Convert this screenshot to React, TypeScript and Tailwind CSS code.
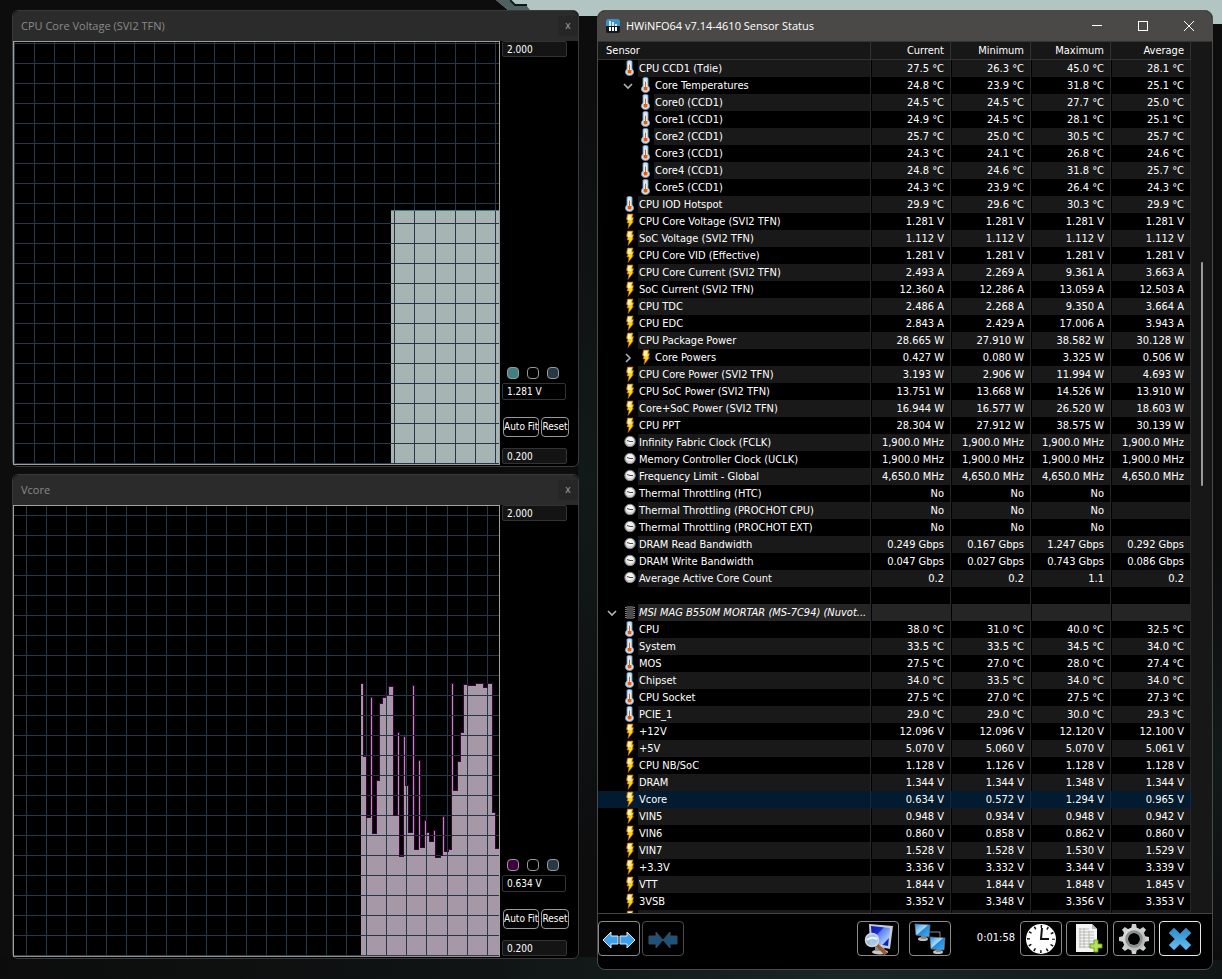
import { useId } from "react";
import clsx from "clsx";

type Kind = "temp" | "power" | "clock" | "chip" | "none";

interface SensorRow {
  kind: Kind;
  name: string;
  values: string[];
  nested?: boolean;
  toggle?: "open" | "closed";
}

interface Point {
  x: number;
  y: number;
}

interface GraphWindowProps {
  title: string;
  value: string;
  viewHeight: number;
  columns: number[];
  rows: number[];
  points: Point[];
  line: string;
  fill: string;
  swatchClass: string;
  className: string;
}

const row = (kind: Kind, name: string, values: string): SensorRow => ({
  kind,
  name,
  values: values ? values.split("|") : ["", "", "", ""],
});

const nested = (
  kind: Kind,
  name: string,
  values: string,
  toggle?: "open" | "closed"
): SensorRow => ({ ...row(kind, name, values), nested: true, toggle });

const SENSORS: SensorRow[] = [
  row("temp", "CPU CCD1 (Tdie)", "27.5 °C|26.3 °C|45.0 °C|28.1 °C"),
  nested("temp", "Core Temperatures", "24.8 °C|23.9 °C|31.8 °C|25.1 °C", "open"),
  nested("temp", "Core0 (CCD1)", "24.5 °C|24.5 °C|27.7 °C|25.0 °C"),
  nested("temp", "Core1 (CCD1)", "24.9 °C|24.5 °C|28.1 °C|25.1 °C"),
  nested("temp", "Core2 (CCD1)", "25.7 °C|25.0 °C|30.5 °C|25.7 °C"),
  nested("temp", "Core3 (CCD1)", "24.3 °C|24.1 °C|26.8 °C|24.6 °C"),
  nested("temp", "Core4 (CCD1)", "24.8 °C|24.6 °C|31.8 °C|25.7 °C"),
  nested("temp", "Core5 (CCD1)", "24.3 °C|23.9 °C|26.4 °C|24.3 °C"),
  row("temp", "CPU IOD Hotspot", "29.9 °C|29.6 °C|30.3 °C|29.9 °C"),
  row("power", "CPU Core Voltage (SVI2 TFN)", "1.281 V|1.281 V|1.281 V|1.281 V"),
  row("power", "SoC Voltage (SVI2 TFN)", "1.112 V|1.112 V|1.112 V|1.112 V"),
  row("power", "CPU Core VID (Effective)", "1.281 V|1.281 V|1.281 V|1.281 V"),
  row("power", "CPU Core Current (SVI2 TFN)", "2.493 A|2.269 A|9.361 A|3.663 A"),
  row("power", "SoC Current (SVI2 TFN)", "12.360 A|12.286 A|13.059 A|12.503 A"),
  row("power", "CPU TDC", "2.486 A|2.268 A|9.350 A|3.664 A"),
  row("power", "CPU EDC", "2.843 A|2.429 A|17.006 A|3.943 A"),
  row("power", "CPU Package Power", "28.665 W|27.910 W|38.582 W|30.128 W"),
  nested("power", "Core Powers", "0.427 W|0.080 W|3.325 W|0.506 W", "closed"),
  row("power", "CPU Core Power (SVI2 TFN)", "3.193 W|2.906 W|11.994 W|4.693 W"),
  row("power", "CPU SoC Power (SVI2 TFN)", "13.751 W|13.668 W|14.526 W|13.910 W"),
  row("power", "Core+SoC Power (SVI2 TFN)", "16.944 W|16.577 W|26.520 W|18.603 W"),
  row("power", "CPU PPT", "28.304 W|27.912 W|38.575 W|30.139 W"),
  row("clock", "Infinity Fabric Clock (FCLK)", "1,900.0 MHz|1,900.0 MHz|1,900.0 MHz|1,900.0 MHz"),
  row("clock", "Memory Controller Clock (UCLK)", "1,900.0 MHz|1,900.0 MHz|1,900.0 MHz|1,900.0 MHz"),
  row("clock", "Frequency Limit - Global", "4,650.0 MHz|4,650.0 MHz|4,650.0 MHz|4,650.0 MHz"),
  row("clock", "Thermal Throttling (HTC)", "No|No|No|"),
  row("clock", "Thermal Throttling (PROCHOT CPU)", "No|No|No|"),
  row("clock", "Thermal Throttling (PROCHOT EXT)", "No|No|No|"),
  row("clock", "DRAM Read Bandwidth", "0.249 Gbps|0.167 Gbps|1.247 Gbps|0.292 Gbps"),
  row("clock", "DRAM Write Bandwidth", "0.047 Gbps|0.027 Gbps|0.743 Gbps|0.086 Gbps"),
  row("clock", "Average Active Core Count", "0.2|0.2|1.1|0.2"),
  row("none", "", ""),
  { ...row("chip", "MSI MAG B550M MORTAR (MS-7C94) (Nuvot...", ""), toggle: "open" },
  row("temp", "CPU", "38.0 °C|31.0 °C|40.0 °C|32.5 °C"),
  row("temp", "System", "33.5 °C|33.5 °C|34.5 °C|34.0 °C"),
  row("temp", "MOS", "27.5 °C|27.0 °C|28.0 °C|27.4 °C"),
  row("temp", "Chipset", "34.0 °C|33.5 °C|34.0 °C|34.0 °C"),
  row("temp", "CPU Socket", "27.5 °C|27.0 °C|27.5 °C|27.3 °C"),
  row("temp", "PCIE_1", "29.0 °C|29.0 °C|30.0 °C|29.3 °C"),
  row("power", "+12V", "12.096 V|12.096 V|12.120 V|12.100 V"),
  row("power", "+5V", "5.070 V|5.060 V|5.070 V|5.061 V"),
  row("power", "CPU NB/SoC", "1.128 V|1.126 V|1.128 V|1.128 V"),
  row("power", "DRAM", "1.344 V|1.344 V|1.348 V|1.344 V"),
  row("power", "Vcore", "0.634 V|0.572 V|1.294 V|0.965 V"),
  row("power", "VIN5", "0.948 V|0.934 V|0.948 V|0.942 V"),
  row("power", "VIN6", "0.860 V|0.858 V|0.862 V|0.860 V"),
  row("power", "VIN7", "1.528 V|1.528 V|1.530 V|1.529 V"),
  row("power", "+3.3V", "3.336 V|3.332 V|3.344 V|3.339 V"),
  row("power", "VTT", "1.844 V|1.844 V|1.848 V|1.845 V"),
  row("power", "3VSB", "3.352 V|3.348 V|3.356 V|3.353 V"),
  row("power", "", ""),
];

const SELECTED = "Vcore";

const VOLTAGE_POINTS: Point[] = [{ x: 378, y: 169 }];

// Left edge and top of every step of the Vcore history
const VCORE_POINTS: Point[] = [
  [348, 178], [350, 251], [353, 312], [357, 192], [359, 328], [363, 275],
  [366, 198], [369, 192], [372, 189], [375, 181], [380, 310], [384, 227],
  [386, 351], [390, 231], [392, 280], [395, 327], [399, 180], [401, 344],
  [405, 255], [407, 342], [411, 315], [413, 327], [416, 336], [420, 325],
  [422, 352], [427, 350], [429, 311], [431, 346], [435, 344], [438, 178],
  [440, 285], [444, 256], [447, 227], [450, 179], [455, 180], [462, 178],
  [470, 182], [474, 178], [479, 307], [482, 343],
].map(([x, y]) => ({ x, y }));

// One grid line in the middle sits a pixel further right
const gridColumns = (start: number, shiftFrom: number) =>
  Array.from({ length: 25 }, (_, i) => start + i * 20 + (i >= shiftFrom ? 1 : 0)).filter(
    (x) => x < 486
  );

const gridRows = (start: number, height: number) =>
  Array.from({ length: 25 }, (_, i) => start + i * 20).filter((y) => y < height - 1);

function stepPath(points: Point[]) {
  const [first, ...rest] = points;
  return `M${first.x} ${first.y}${rest.map((p) => `H${p.x}V${p.y}`).join("")}H486`;
}

// The outline is laid as one pixel wide bars so that narrow spikes stay open
function StepOutline({ points, color }: { points: Point[]; color: string }) {
  return (
    <g fill={color}>
      {points.map((p, i) => {
        const right = points[i + 1]?.x ?? 485;
        const previous = points[i - 1]?.y ?? p.y;
        return (
          <g key={p.x}>
            <rect height="1" width={right - p.x + 1} x={p.x} y={p.y} />
            <rect height={Math.abs(previous - p.y) + 1} width="1" x={p.x} y={Math.min(previous, p.y)} />
          </g>
        );
      })}
    </g>
  );
}

function Wallpaper() {
  const id = useId();
  return (
    <svg
      aria-hidden="true"
      className="absolute inset-0 -z-10 h-full w-full"
      preserveAspectRatio="none"
      viewBox="0 0 1222 979"
    >
      <defs>
        <linearGradient id={id} x1="0" x2="1" y1="0" y2="0">
          <stop offset="0" stopColor="#0c0c0c" />
          <stop offset="0.4" stopColor="#101414" />
          <stop offset="0.7" stopColor="#1a2626" />
          <stop offset="1" stopColor="#101616" />
        </linearGradient>
        <linearGradient id={`${id}v`} x1="0" x2="0" y1="0" y2="1">
          <stop offset="0" stopColor="#0d0d0e" />
          <stop offset="0.5" stopColor="#121919" />
          <stop offset="1" stopColor="#0d0d0e" />
        </linearGradient>
      </defs>
      <rect fill="#0d0d0e" height="979" width="1222" />
      <rect fill={`url(#${id}v)`} height="760" width="20" x="578" y="100" />
      <rect fill={`url(#${id})`} height="22" width="1222" y="957" />
      <rect fill={`url(#${id}v)`} height="400" width="10" x="1212" y="560" />
      <path d="M496 0H1222V24H1200V16H530L508 10Z" fill="#b2c5c3" />
      <path d="M496 0L508 10H530L526 5H514L509 0Z" fill="#4f6060" />
      <path d="M510 0L515 5H527" fill="none" stroke="#101818" strokeWidth="2" />
    </svg>
  );
}

function GraphWindow({
  title,
  value,
  viewHeight,
  columns,
  rows,
  points,
  line,
  fill,
  swatchClass,
  className,
}: GraphWindowProps) {
  return (
    <section
      className={clsx(
        "flex min-h-0 flex-col rounded-md border border-[#3a3a3a] bg-black pb-px",
        className
      )}
    >
      <header className="flex h-[30px] shrink-0 items-center justify-between rounded-t-md bg-[#2b2b2b] pl-2">
        <h2 className="font-['Open_Sans',sans-serif] text-[11px] text-[#8a8a8a]">{title}</h2>
        <button
          aria-label={`Close ${title}`}
          className="h-5 w-5 bg-[#262626] text-[11px] leading-5 text-[#9a9a9a]"
          type="button"
        >
          x
        </button>
      </header>
      <div className="flex min-h-0 flex-1">
        <svg
          aria-label={`${title} history`}
          className="h-full min-w-0 flex-1"
          preserveAspectRatio="none"
          role="img"
          shapeRendering="crispEdges"
          viewBox={`0 0 487 ${viewHeight}`}
        >
          <path d={`${stepPath(points)}V${viewHeight - 1}H${points[0].x}Z`} fill={fill} />
          {columns.map((x) => (
            <rect fill="#263746" height={viewHeight} key={x} width="1" x={x} y="1" />
          ))}
          {rows.map((y) => (
            <rect fill="#263746" height="1" key={y} width="486" x="1" y={y} />
          ))}
          <StepOutline color={line} points={points} />
          <rect
            fill="none"
            height={viewHeight - 1}
            stroke="#a0a0a0"
            width="486"
            x="0.5"
            y="0.5"
          />
        </svg>
        <div className="flex w-[78px] shrink-0 flex-col items-start pb-px pl-0.5">
          <input
            aria-label="Scale maximum"
            className="h-4 w-[65px] rounded-xs border border-[#333] bg-[#141414] pl-1 text-[10px] text-white"
            defaultValue="2.000"
          />
          <div className="mt-auto mb-1 flex gap-2 pl-[5px]">
            <button
              aria-label="Line color"
              className={clsx("h-3 w-3 rounded-sm border border-[#999]", swatchClass)}
              type="button"
            />
            <button
              aria-label="Background color"
              className="h-3 w-3 rounded-sm border border-[#999] bg-black"
              type="button"
            />
            <button
              aria-label="Grid color"
              className="h-3 w-3 rounded-sm border border-[#999] bg-[#263746]"
              type="button"
            />
          </div>
          <input
            aria-label="Current value"
            className="h-[17px] w-16 rounded-xs border border-[#333] bg-black pl-1 text-[10px] text-white"
            readOnly
            value={value}
          />
          <div className="mt-[17px] mb-[11px] flex gap-0.5 pl-px">
            <button
              className="h-5 w-9 rounded-sm border border-[#999] text-[10px] leading-4 whitespace-nowrap text-white"
              type="button"
            >
              Auto Fit
            </button>
            <button
              className="h-5 w-7 rounded-sm border border-[#999] text-[10px] leading-4 text-white"
              type="button"
            >
              Reset
            </button>
          </div>
          <input
            aria-label="Scale minimum"
            className="h-4 w-[65px] rounded-xs border border-[#333] bg-[#141414] pl-1 text-[10px] text-white"
            defaultValue="0.200"
          />
        </div>
      </div>
    </section>
  );
}

function SensorIcon({ kind }: { kind: Kind }) {
  if (kind === "none") {
    return <span className="w-4 shrink-0" />;
  }
  return (
    <svg aria-hidden="true" className="h-[17px] w-4 shrink-0" viewBox="0 0 16 17">
      {kind === "temp" && (
        <>
          <path
            d="M5 1.500Q5 .5 7.500 .5T10 1.500V9Q12 10.500 11.500 13Q10.500 15.500 7.500 15.500T3.500 13Q3 10.500 5 9Z"
            fill="#cfe4f2"
            stroke="#6f9fc0"
            strokeWidth=".9"
          />
          <path d="M6.500 3.500H8.500V9.500L10 11V14H5V11L6.500 9.500Z" fill="#fff" />
          <path d="M7 4.500H8V10H9.500V13.500H5.500V10H7Z" fill="#e8590c" />
        </>
      )}
      {kind === "power" && (
        <>
          <path
            d="M5.500 1H11L10 4.500H11.500L10.500 8.500H11.500L6 15.500L7 10H5L6 6.500H4.500Z"
            fill="#ffd21c"
            stroke="#b8620c"
            strokeWidth=".6"
          />
          <path d="M6.200 2H9.500L8.500 5.500H10L9 7H5.500Z" fill="#fff2b8" />
        </>
      )}
      {kind === "clock" && (
        <>
          <circle cx="8" cy="7.500" fill="#d6d6d6" r="5.200" stroke="#858585" />
          <circle cx="8" cy="6.500" fill="#f4f4f4" r="3.600" />
          <path d="M5 6.500L8 7.500H11" fill="none" stroke="#444" />
        </>
      )}
      {kind === "chip" && (
        <>
          <path
            d="M3 3.500H13M3 5.500H13M3 7.500H13M3 9.500H13M3 11.500H13M3 13.500H13"
            stroke="#8c8c8c"
          />
          <rect fill="#4c4c4c" height="13" width="7" x="4.500" y="2" />
        </>
      )}
    </svg>
  );
}

function Toggle({ state }: { state?: "open" | "closed" }) {
  if (!state) {
    return <span className="mr-1 w-3 shrink-0" />;
  }
  return (
    <button
      aria-label={state === "open" ? "Collapse group" : "Expand group"}
      className="mr-1 flex w-3 shrink-0 items-center justify-center"
      type="button"
    >
      <svg className="h-3 w-3" fill="none" stroke="#b4b4b4" strokeWidth="1.600" viewBox="0 0 12 12">
        <path d={state === "open" ? "M2 4L6 8L10 4" : "M4 2L8 6L4 10"} />
      </svg>
    </button>
  );
}

function SensorLine({ sensor, index }: { sensor: SensorRow; index: number }) {
  const selected = sensor.name === SELECTED;
  const shade = clsx(
    selected && "bg-[#021b30]",
    !selected && sensor.kind === "chip" && "bg-[#252525]",
    !selected && sensor.kind !== "chip" && (index % 2 === 0 ? "bg-[#191919]" : "bg-black")
  );
  return (
    <tr className="h-[17px]">
      <td className={clsx("border-r border-[#24282c] p-0", selected && "bg-[#021b30]")}>
        <div className={clsx("flex h-[17px]", sensor.nested ? "pl-6" : "pl-2")}>
          <Toggle state={sensor.toggle} />
          <SensorIcon kind={sensor.kind} />
          <span
            className={clsx(
              "min-w-0 flex-1 pt-px pl-px leading-4 whitespace-nowrap",
              sensor.kind === "chip" && "italic",
              shade
            )}
          >
            {sensor.name}
          </span>
        </div>
      </td>
      {sensor.values.map((value, i) => (
        <td
          className={clsx(
            "border-r border-l p-0 pt-px pr-1.5 text-right leading-4 whitespace-nowrap",
            selected ? "border-r-[#0a2c48] border-l-[#021b30]" : "border-r-[#24282c] border-l-black",
            shade
          )}
          key={i}
        >
          {value}
        </td>
      ))}
    </tr>
  );
}

function SensorTable() {
  return (
    <div className="flex min-h-0 flex-1 overflow-hidden border-t border-[#333] bg-black text-[11px] text-white">
      <table className="w-full min-w-0 flex-1 table-fixed border-separate border-spacing-0 self-start">
        <colgroup>
          <col />
          <col className="w-20" />
          <col className="w-20" />
          <col className="w-20" />
          <col className="w-20" />
        </colgroup>
        <thead>
          <tr className="h-[18px] bg-[#171717]">
            <th className="border-r border-b border-[#333] p-0 pl-2 text-left leading-[17px] font-normal">
              Sensor
            </th>
            {["Current", "Minimum", "Maximum", "Average"].map((label) => (
              <th
                className="border-r border-b border-[#333] p-0 pr-1.5 text-right leading-[17px] font-normal"
                key={label}
              >
                {label}
              </th>
            ))}
          </tr>
        </thead>
        <tbody>
          {SENSORS.map((sensor, index) => (
            <SensorLine index={index} key={index} sensor={sensor} />
          ))}
        </tbody>
      </table>
      <div className="flex w-[21px] shrink-0 flex-col items-center bg-[#171717]">
        <div className="flex-[220]" />
        <div className="w-0.5 flex-[224] rounded-full bg-[#9a9a9a]" />
        <div className="flex-[427]" />
      </div>
    </div>
  );
}

function ToolButton({
  label,
  className = "border-[#8a8a8a]",
  children,
}: {
  label: string;
  className?: string;
  children: React.ReactNode;
}) {
  return (
    <button
      aria-label={label}
      className={clsx(
        "flex h-[35px] w-[42px] items-center justify-center rounded-sm border bg-black",
        className
      )}
      type="button"
    >
      <svg className="h-8 w-9" viewBox="0 0 36 32">
        {children}
      </svg>
    </button>
  );
}

function Toolbar() {
  const id = useId();
  return (
    <footer className="flex shrink-0 items-center border-t border-[#444] pt-[7px] pr-[11px] pb-[13px]">
      <ToolButton label="Expand columns">
        <path d="M2 17L10 9V13H17V21H10V25Z" fill="#3ea0ec" stroke="#d8efff" />
        <path d="M34 17L26 9V13H19V21H26V25Z" fill="#3ea0ec" stroke="#d8efff" />
      </ToolButton>
      <div className="ml-0.5">
        <ToolButton className="border-[#4a4a4a]" label="Shrink columns">
          <path d="M18 17L11 9V13H4V21H11V25Z" fill="#1c527c" stroke="#3c4c58" />
          <path d="M18 17L25 9V13H32V21H25V25Z" fill="#1c527c" stroke="#3c4c58" />
        </ToolButton>
      </div>
      <div className="ml-auto flex items-center">
        <ToolButton label="Sensor summary">
          <defs>
            <linearGradient id={`${id}s`} x1="0" x2="1" y1="0" y2="1">
              <stop offset="0" stopColor="#0a14b4" />
              <stop offset="0.35" stopColor="#1a30d0" />
              <stop offset="0.4" stopColor="#5c80ee" />
              <stop offset="0.75" stopColor="#a4c4ff" />
              <stop offset="0.8" stopColor="#0a22c0" />
            </linearGradient>
          </defs>
          <ellipse cx="20" cy="29" fill="#c8c8c8" rx="8" ry="2.500" />
          <path d="M15 23H24L25 28H15Z" fill="#909090" />
          <path d="M9 1L33 3L30 26L10 22Z" fill="#c8ccd4" />
          <path d="M11 3L30 5L28 23L12 20Z" fill={`url(#${id}s)`} />
          <path d="M17 22L26 31" stroke="#9a5b2c" strokeWidth="3.500" />
          <circle cx="12" cy="17" fill="#a9cdea" fillOpacity=".9" r="6.500" stroke="#d8d8d8" strokeWidth="1.500" />
          <path d="M7 17Q11 13 17 16" fill="none" stroke="#e9f6ff" strokeWidth="2" />
        </ToolButton>
        <div className="ml-[10px]">
          <ToolButton label="Remote sensors">
            <defs>
              <linearGradient id={`${id}m`} x1="0" x2="1" y1="0" y2="1">
                <stop offset="0" stopColor="#2a90e4" />
                <stop offset="0.45" stopColor="#a8dcff" />
                <stop offset="0.5" stopColor="#2488dc" />
                <stop offset="1" stopColor="#4ab0f4" />
              </linearGradient>
            </defs>
            <path d="M18 9H28V15" fill="none" stroke="#888" />
            <ellipse cx="11" cy="16" fill="#c0c0c0" rx="5" ry="2" />
            <path d="M9 12H14V16H9Z" fill="#888" />
            <path d="M3 1L18 2L17 14L4 12Z" fill={`url(#${id}m)`} stroke="#6a7a88" strokeWidth=".7" />
            <ellipse cx="26" cy="29" fill="#c0c0c0" rx="5" ry="2" />
            <path d="M24 25H29V29H24Z" fill="#888" />
            <path d="M18 14L33 15L32 27L19 26Z" fill={`url(#${id}m)`} stroke="#6a7a88" strokeWidth=".7" />
          </ToolButton>
        </div>
        <time className="w-[69px] pr-[5px] text-right text-[11px] text-white">0:01:58</time>
        <div className="flex gap-1">
          <ToolButton label="Reset timer">
            <circle cx="18" cy="16" fill="#fff" r="15" />
            <circle
              cx="18"
              cy="16"
              fill="none"
              r="12.500"
              stroke="#111"
              strokeDasharray="1.500 5.045"
              strokeDashoffset=".75"
              strokeWidth="3"
            />
            <path d="M19 5L18 16H26" fill="none" stroke="#111" strokeWidth="2" />
          </ToolButton>
          <ToolButton label="Start logging">
            <path d="M7 1H23L28 6V29H7Z" fill="#f4f4f2" />
            <path d="M23 1V6H28Z" fill="#bbb" />
            <path
              d="M10 6H20M10 9H25M10 12H25M10 15H25M10 18H25M10 21H25M10 24H22M11 5V25M15 5V25M20 8V25"
              stroke="#b4b4b4"
              strokeWidth=".9"
            />
            <path
              d="M26 17H29V21H33V25H29V29H25V25H21V21H25V17Z"
              fill="#b5e058"
              stroke="#699a1c"
              strokeWidth=".9"
            />
          </ToolButton>
          <div className="ml-px flex gap-1">
            <ToolButton label="Configure sensors">
              <defs>
                <linearGradient id={`${id}g`} x1="0" x2="1" y1="0" y2="1">
                  <stop offset="0" stopColor="#e4e6e6" />
                  <stop offset="1" stopColor="#a8acac" />
                </linearGradient>
              </defs>
              <g fill="#cfd1d1">
                <path d="M15 6L16 1H20L21 6ZM15 26L16 31H20L21 26Z" />
                <path d="M15 6L16 1H20L21 6ZM15 26L16 31H20L21 26Z" transform="rotate(45 18 16)" />
                <path d="M15 6L16 1H20L21 6ZM15 26L16 31H20L21 26Z" transform="rotate(90 18 16)" />
                <path d="M15 6L16 1H20L21 6ZM15 26L16 31H20L21 26Z" transform="rotate(135 18 16)" />
              </g>
              <circle cx="18" cy="16" fill={`url(#${id}g)`} r="11.500" />
              <circle cx="18" cy="16" fill="none" r="7.500" stroke="#8a8e8e" strokeWidth="2.500" />
              <circle cx="18" cy="16" fill="#000" r="6" />
            </ToolButton>
            <ToolButton className="border-[#e8e8e8]" label="Close sensors">
              <defs>
                <linearGradient id={`${id}x`} x1="0" x2="0" y1="0" y2="1">
                  <stop offset="0" stopColor="#2a8cc8" />
                  <stop offset="1" stopColor="#66bff0" />
                </linearGradient>
              </defs>
              <path
                d="M12 5L18 11L24 5L29 10L23 16L29 22L24 27L18 21L12 27L7 22L13 16L7 10Z"
                fill={`url(#${id}x)`}
                stroke="#2c84b8"
                strokeLinejoin="round"
                strokeWidth=".7"
              />
            </ToolButton>
          </div>
        </div>
      </div>
    </footer>
  );
}

function SensorWindow() {
  return (
    <section className="flex min-h-0 flex-col overflow-hidden rounded-lg border border-[#4a4a4a] bg-black">
      <header className="flex h-[30px] shrink-0 items-center bg-[#4b4947] pl-2 text-white">
        <svg aria-hidden="true" className="mr-1 h-4 w-4" viewBox="0 0 16 16">
          <rect fill="#101820" height="14" rx="2" width="14" y="1" />
          <path d="M0 8V3Q0 1 2 1H12Q14 1 14 3V8Z" fill="#3b93c4" />
          <path d="M4 3V8M7 4V8M10 6V8" stroke="#fff" strokeWidth="1.500" />
          <path d="M4 9V13M7 9V13M10 9V13" stroke="#fff" strokeWidth="2" />
        </svg>
        <h1 className="flex-1 font-['Open_Sans',sans-serif] text-[11px]">
          HWiNFO64 v7.14-4610 Sensor Status
        </h1>
        <div className="flex">
          <button aria-label="Minimize" className="flex h-[30px] w-[46px] items-center justify-center" type="button">
            <svg className="h-3 w-3" stroke="#fff" viewBox="0 0 12 12">
              <path d="M1 5.500H11" />
            </svg>
          </button>
          <button aria-label="Maximize" className="flex h-[30px] w-[46px] items-center justify-center" type="button">
            <svg className="h-3 w-3" fill="none" stroke="#fff" viewBox="0 0 12 12">
              <rect height="9" width="9" x="1.500" y="1.500" />
            </svg>
          </button>
          <button aria-label="Close" className="flex h-[30px] w-[46px] items-center justify-center" type="button">
            <svg className="h-3 w-3" stroke="#fff" viewBox="0 0 12 12">
              <path d="M1 1L11 11M11 1L1 11" />
            </svg>
          </button>
        </div>
      </header>
      <SensorTable />
      <Toolbar />
    </section>
  );
}

export default function App() {
  return (
    <main className="relative isolate grid h-screen grid-cols-[567fr_616fr] gap-[18px] overflow-hidden pt-[10px] pr-[9px] pb-[9px] pl-3 font-['DejaVu_Sans_Condensed','DejaVu_Sans',sans-serif]">
      <Wallpaper />
      <div className="flex min-h-0 flex-col gap-[7px] pb-[11px]">
        <GraphWindow
          className="flex-[457]"
          columns={gridColumns(1, 21)}
          fill="#a6b4b4"
          line="#408080"
          points={VOLTAGE_POINTS}
          rows={gridRows(2, 424)}
          swatchClass="bg-[#408080]"
          title="CPU Core Voltage (SVI2 TFN)"
          value="1.281 V"
          viewHeight={424}
        />
        <GraphWindow
          className="flex-[485]"
          columns={gridColumns(13, 21)}
          fill="#a698a6"
          line="#400040"
          points={VCORE_POINTS}
          rows={gridRows(10, 452)}
          swatchClass="bg-[#400040]"
          title="Vcore"
          value="0.634 V"
          viewHeight={452}
        />
      </div>
      <SensorWindow />
    </main>
  );
}
